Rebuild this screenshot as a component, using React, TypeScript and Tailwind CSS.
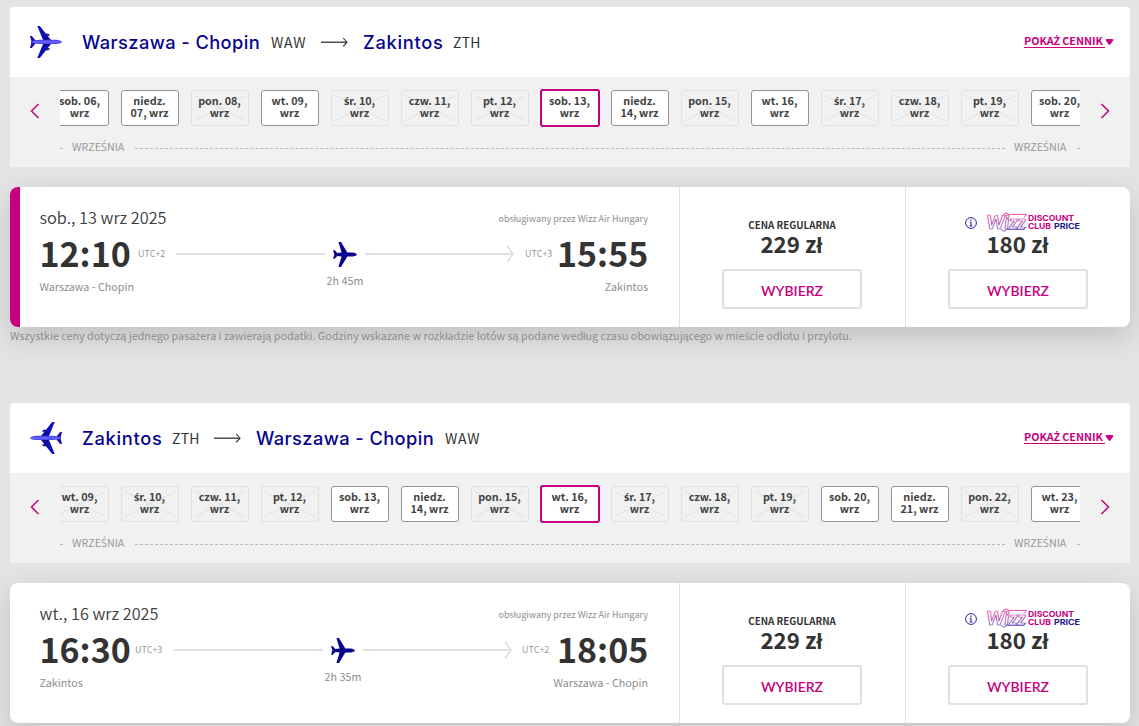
import clsx from 'clsx';

type DayStatus = 'open' | 'closed' | 'selected';

interface Day {
  label: string;
  status: DayStatus;
}

interface Flight {
  from: string;
  fromCode: string;
  to: string;
  toCode: string;
  inbound: boolean;
  days: Day[];
  date: string;
  departure: string;
  departureZone: string;
  arrival: string;
  arrivalZone: string;
  duration: string;
  zoneClass: string;
  arrivalZoneClass: string;
}

const day = (label: string, status: DayStatus = 'closed'): Day => ({ label, status });

const outbound: Flight = {
  from: 'Warszawa - Chopin',
  fromCode: 'WAW',
  to: 'Zakintos',
  toCode: 'ZTH',
  inbound: false,
  days: [
    day('sob. 06,|wrz', 'open'),
    day('niedz.|07, wrz', 'open'),
    day('pon. 08,|wrz'),
    day('wt. 09,|wrz', 'open'),
    day('śr. 10,|wrz'),
    day('czw. 11,|wrz'),
    day('pt. 12,|wrz'),
    day('sob. 13,|wrz', 'selected'),
    day('niedz.|14, wrz', 'open'),
    day('pon. 15,|wrz'),
    day('wt. 16,|wrz', 'open'),
    day('śr. 17,|wrz'),
    day('czw. 18,|wrz'),
    day('pt. 19,|wrz'),
    day('sob. 20,|wrz', 'open'),
  ],
  date: 'sob., 13 wrz 2025',
  departure: '12:10',
  departureZone: 'UTC+2',
  arrival: '15:55',
  arrivalZone: 'UTC+3',
  duration: '2h 45m',
  zoneClass: 'ml-[7px] mr-[11px]',
  arrivalZoneClass: 'ml-[11px] mr-[5px]',
};

const inbound: Flight = {
  from: 'Zakintos',
  fromCode: 'ZTH',
  to: 'Warszawa - Chopin',
  toCode: 'WAW',
  inbound: true,
  days: [
    day('wt. 09,|wrz'),
    day('śr. 10,|wrz'),
    day('czw. 11,|wrz'),
    day('pt. 12,|wrz'),
    day('sob. 13,|wrz', 'open'),
    day('niedz.|14, wrz', 'open'),
    day('pon. 15,|wrz'),
    day('wt. 16,|wrz', 'selected'),
    day('śr. 17,|wrz'),
    day('czw. 18,|wrz'),
    day('pt. 19,|wrz'),
    day('sob. 20,|wrz', 'open'),
    day('niedz.|21, wrz', 'open'),
    day('pon. 22,|wrz'),
    day('wt. 23,|wrz', 'open'),
  ],
  date: 'wt., 16 wrz 2025',
  departure: '16:30',
  departureZone: 'UTC+3',
  arrival: '18:05',
  arrivalZone: 'UTC+2',
  duration: '2h 35m',
  zoneClass: 'ml-[4px] mr-[12px]',
  arrivalZoneClass: 'ml-[10px] mr-[8px]',
};

// The CJK family has no precomposed ś/ż, so those letters come from Open Sans
function Polish({ text }: { text: string }) {
  return (
    <>
      {text.split(/([śŚżŻ])/).map((part, i) =>
        i % 2 ? <span key={i} className="font-['Open_Sans']">{part}</span> : part,
      )}
    </>
  );
}

function HeaderPlane({ flipped }: { flipped: boolean }) {
  return (
    <svg width="32" height="32" viewBox="0 0 32 32" className={clsx('shrink-0', flipped && '-scale-x-100')}>
      <path d="M7.3 0H9.8L21 14H13Z M7.3 32H9.8L21 18H13Z" fill="#0f0db4" />
      <path d="M0 10H1.8L5.5 14.6V17.4L1.8 22H0L1.6 16Z" fill="#0f0db4" />
      <path d="M15.5 7.8H18.6L20 9.8H17Z M15.5 24.2H18.6L20 22.2H17Z" fill="#0a0878" />
      <path d="M16 11.5 20 14H14Z M16 20.5 20 18H14Z" fill="#0a0878" />
      <path d="M1 15.2C4 14 8 13.8 14 13.8H26C29 13.9 31.6 15 32 16 31.6 17 29 18 26 18H14C8 18 4 17.6 1 16.8Z" fill="#4b48ee" />
      <path d="M3 16H31" stroke="#7573fa" strokeWidth="1" />
    </svg>
  );
}

function RoutePlane() {
  return (
    <svg width="24" height="25" viewBox="0 0 24 25" className="shrink-0" fill="#06038d">
      <path d="M5.4 0H8L14.3 10.4H19.5C22 10.6 23.6 11.5 24 12.5 23.6 13.5 22 14.4 19.5 14.6H14.3L8 25H5.4L8.6 14.4 4.4 13.9 1.7 16.8H0L1.4 12.5 0 8.2H1.7L4.4 11.1 8.6 10.6Z" />
    </svg>
  );
}

function Chevron({ flipped }: { flipped?: boolean }) {
  return (
    <svg width="10" height="16" viewBox="0 0 10 16" className={clsx('mt-[6px] shrink-0', flipped && '-scale-x-100')}>
      <path d="M8.5 1 1.5 8l7 7" fill="none" stroke="#c6007e" strokeWidth="1.5" />
    </svg>
  );
}

function DayTile({ label, status }: Day) {
  return (
    <div
      className={clsx(
        'relative flex shrink-0 flex-col items-center justify-center rounded-[3px] pr-px pb-[2px] text-[10.75px] leading-[12px] font-bold whitespace-nowrap text-[#424242]',
        status === 'open' && 'h-9 w-[58px] border border-[#949494] bg-white',
        status === 'closed' && 'h-9 w-[58px] border border-[#e0e0e0]',
        status === 'selected' && '-mx-px h-[38px] w-[60px] border-2 border-[#c6007e] bg-white',
      )}
    >
      {status === 'closed' && (
        <svg width="50" height="26" viewBox="0 0 50 26" className="absolute top-1 left-[3px]">
          <path d="M0 .5 50 25.5M50 .5 0 25.5" stroke="#e0e0e0" strokeWidth="1" />
        </svg>
      )}
      {label.split('|').map((line) => (
        <span key={line} className="relative h-3">
          <Polish text={line} />
        </span>
      ))}
    </div>
  );
}

function MonthLine() {
  return (
    <div className="mx-[50px] mt-[13px] flex h-4 items-center text-[10.75px] leading-4 text-[#999]">
      <span className="mt-px w-[3px] border-t border-[#b8b8b8]" />
      <span className="mb-[2px] ml-[9px] h-4 w-[54px]"><Polish text="WRZEŚNIA" /></span>
      <span className="mt-px ml-[9px] flex-1 border-t border-dashed border-[#b8b8b8]" />
      <span className="mb-[2px] ml-[9px] h-4 w-[54px]"><Polish text="WRZEŚNIA" /></span>
      <span className="mt-px ml-[9px] w-[3px] border-t border-[#b8b8b8]" />
    </div>
  );
}

function ClubLogo() {
  return (
    <svg width="94" height="20" viewBox="0 0 94 20" className="shrink-0 overflow-visible">
      <defs>
        <linearGradient id="wizz" x1="0" y1="0" x2="0" y2="1">
          <stop offset="0.2" stopColor="#d6218f" />
          <stop offset="0.85" stopColor="#5a3ab0" />
        </linearGradient>
      </defs>
      <text
        x="-0.5"
        y="17"
        textLength="39"
        lengthAdjust="spacingAndGlyphs"
        fontFamily="Lato, sans-serif"
        fontSize="18"
        fontWeight="900"
        fontStyle="italic"
        fill="none"
        stroke="url(#wizz)"
        strokeWidth="0.7"
      >
        Wizz
      </text>
      <path d="M15.5 3.4 19 .8 22 2.4H39.5L37 5.5M14 17.2 17 19.4 20 17.4H37L39 14.5" fill="none" stroke="url(#wizz)" strokeWidth="0.8" />
      <g fontFamily="Inter, sans-serif" fontSize="8" fontWeight="700" fill="#c6007e">
        <text x="41" y="8.6" textLength="46" lengthAdjust="spacingAndGlyphs">DISCOUNT</text>
        <text x="41" y="16.6" textLength="23" lengthAdjust="spacingAndGlyphs">CLUB</text>
        <text x="67" y="16.6" textLength="26" lengthAdjust="spacingAndGlyphs" fill="#1c1591">PRICE</text>
      </g>
    </svg>
  );
}

function Price({ amount, club }: { amount: string; club?: boolean }) {
  return (
    <div className={clsx('flex flex-col items-center border-l border-[#e0e0e0] pt-6', club ? 'w-[225px]' : 'w-[226px] pr-px')}>
      {club ? (
        <div className="-mt-px flex h-6 items-center self-start pl-[59px]">
          <svg width="12" height="12" viewBox="0 0 12 12" className="mt-px mr-[10px]" fill="none" stroke="#2a2499">
            <circle cx="6" cy="6" r="5.4" />
            <path d="M6 5v4M4.8 5.3H6M4.6 9h2.8M6 2.6v1.3" strokeWidth="1.1" />
          </svg>
          <ClubLogo />
        </div>
      ) : (
        <div className="-mt-px h-6 pt-[7px] text-[9.8px] leading-4 font-bold text-[#333]">CENA REGULARNA</div>
      )}
      <div className="-mt-px pr-px text-[22.3px] leading-5 font-bold text-[#333]">{amount} zł</div>
      <button className="mt-4 h-10 w-[140px] rounded-[3px] border-2 border-[#e0e0e0] pt-[3px] font-[Lato] text-[14px] font-semibold text-[#c6007e]">
        WYBIERZ
      </button>
    </div>
  );
}

function FlightCard({ flight, selected }: { flight: Flight; selected?: boolean }) {
  return (
    <div className="mt-5 flex h-[140px] overflow-hidden rounded-lg bg-white shadow-[0_10px_30px_rgba(0,0,0,0.16)]">
      <div className={clsx('w-[10px]', selected && 'bg-[#c6007e]')} />
      <div className="flex flex-1 flex-col pt-[17px] pr-[31px] pl-[19.5px]">
        <div className="flex h-[26px] items-center justify-between">
          <span className="text-[16.3px] leading-6 font-[350] text-[#3c3c3c]">{flight.date}</span>
          <span className="mt-[3px] text-[9px] text-[#8e8e8e]">obsługiwany przez Wizz Air Hungary</span>
        </div>
        <div className="mt-px flex h-[46px] items-center">
          <span className="mb-[3px] w-[91.5px] text-[34px] leading-[46px] font-bold text-[#333]">{flight.departure}</span>
          <span className={clsx('w-[27px] text-[9px] text-[#999]', flight.zoneClass)}>{flight.departureZone}</span>
          <span className="h-[2px] flex-1 bg-[#e0e0e0]" />
          <div className="flex h-[25px] w-10 flex-col items-center">
            <RoutePlane />
            <span className="mt-[6px] text-[10.75px] leading-4 whitespace-nowrap text-[#8e8e8e]">{flight.duration}</span>
          </div>
          <div className="flex flex-1 items-center justify-end">
            <span className="-mr-[8px] h-[2px] flex-1 bg-[#e0e0e0]" />
            <svg width="8" height="20" viewBox="0 0 8 20" fill="none" stroke="#e0e0e0" strokeWidth="1.8">
              <path d="M1.2 1.6 6.6 10 1.2 18.4" />
            </svg>
          </div>
          <span className={clsx('w-[27px] text-[9px] text-[#999]', flight.arrivalZoneClass)}>{flight.arrivalZone}</span>
          <span className="mb-[3px] w-[91px] text-right text-[34px] leading-[46px] font-bold text-[#333]">{flight.arrival}</span>
        </div>
        <div className="flex justify-between pt-[2px] text-[10.75px] leading-4 text-[#8e8e8e]">
          <span>{flight.from}</span>
          <span>{flight.to}</span>
        </div>
      </div>
      <Price amount="229" />
      <Price amount="180" club />
    </div>
  );
}

function Station({ city, code }: { city: string; code: string }) {
  const long = city.length > 10;
  return (
    <>
      <span
        className={clsx(
          '-mt-px font-[Inter] text-[18.3px] font-medium whitespace-nowrap text-[#06038d]',
          long ? 'w-[179px] tracking-[0.4px]' : 'w-20 tracking-[0.7px]',
        )}
      >
        {city}
      </span>
      <span
        className={clsx(
          'ml-[10px] text-[14px] whitespace-nowrap text-[#333]',
          code === 'WAW' ? 'w-[35px] tracking-[0.7px]' : 'w-[27px] tracking-[0.2px]',
        )}
      >
        {code}
      </span>
    </>
  );
}

function FlightSection({ flight, selected }: { flight: Flight; selected?: boolean }) {
  return (
    <section>
      <header className="flex h-[70px] items-center rounded-t-[3px] bg-white pr-4 pl-5">
        <HeaderPlane flipped={flight.inbound} />
        <h2 className="ml-5 flex items-center leading-6">
          <Station city={flight.from} code={flight.fromCode} />
          <svg width="27" height="10" viewBox="0 0 27 10" className="mx-[15px]" fill="none" stroke="#333">
            <path d="M0 5.2H26" strokeWidth="1.3" />
            <path d="M22.2 1 26 5.2 22.2 9.4" strokeWidth="1.1" />
          </svg>
          <Station city={flight.to} code={flight.toCode} />
        </h2>
        <a className="mb-[2px] ml-auto flex items-center text-[10.75px] leading-4 font-bold text-[#c6007e]">
          <span className="h-[14px] border-b border-[#c6007e] pr-[2px] leading-[13px]"><Polish text="POKAŻ CENNIK" /></span>
          <svg width="9" height="6" viewBox="0 0 9 6" className="mt-px" fill="#c6007e">
            <path d="M.5 1 1.5 0h6l1 1L5.3 5.4Q4.5 6.2 3.7 5.4Z" />
          </svg>
        </a>
      </header>

      <div className="h-[90px] bg-[#f1f1f1] pt-3">
        <div className="flex items-center justify-between px-5">
          <Chevron />
          <div className="-mx-px w-[1020px] overflow-hidden">
            <div className="-ml-[9px] flex h-[38px] items-center gap-3">
              {flight.days.map((d) => (
                <DayTile key={d.label} {...d} />
              ))}
            </div>
          </div>
          <Chevron flipped />
        </div>
        <MonthLine />
      </div>

      <FlightCard flight={flight} selected={selected} />
    </section>
  );
}

export default function App() {
  return (
    <main className="h-[726px] w-[1139px] overflow-hidden bg-[#e4e4e4] pt-[7px] pl-[10px] font-['Noto_Sans_CJK_SC',sans-serif]">
      <div className="w-[1120px]">
        <FlightSection flight={outbound} selected />
        <p className="mb-[60px] h-4 text-[10.78px] leading-4 text-[#8e8e8e]">
          <Polish text="Wszystkie ceny dotyczą jednego pasażera i zawierają podatki. Godziny wskazane w rozkładzie lotów są podane według czasu obowiązującego w mieście odlotu i przylotu." />
        </p>
        <FlightSection flight={inbound} />
      </div>
    </main>
  );
}
